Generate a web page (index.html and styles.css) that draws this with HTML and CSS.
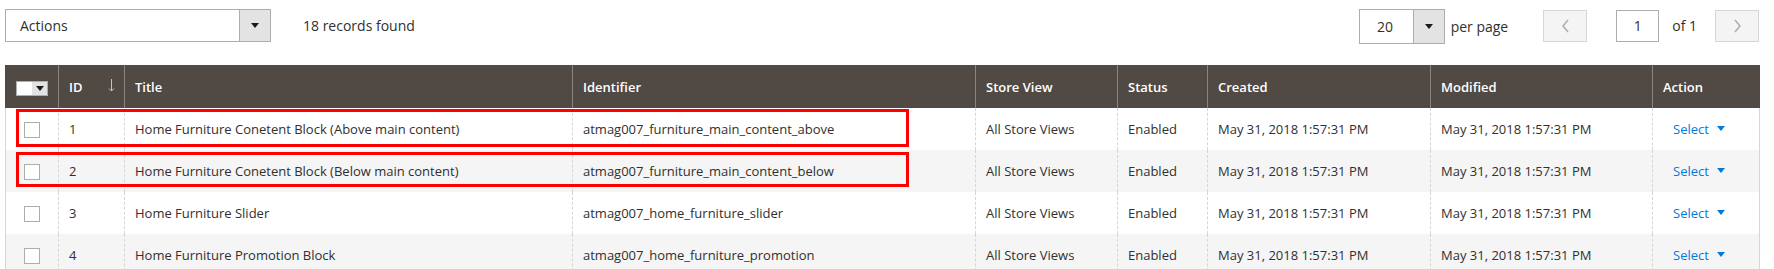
FILE: index.html
```html
<!DOCTYPE html>
<html>
<head>
<meta charset="utf-8">
<link rel="stylesheet" href="styles.css">
</head>
<body>
<div class="page">
  <div class="toolbar">
    <div class="left-tools">
      <div class="actions-select">
        <span class="actions-label">Actions</span>
        <span class="actions-btn"><span class="tri"></span></span>
      </div>
      <span class="records">18 records found</span>
    </div>
    <div class="right-tools">
      <div class="perpage-select">
        <span class="perpage-val">20</span>
        <span class="perpage-btn"><span class="tri"></span></span>
      </div>
      <span class="perpage-label">per page</span>
      <span class="pager-btn prev"><svg width="9" height="14" viewBox="0 0 9 14"><path d="M7 1 L2 7 L7 13" fill="none" stroke="#adadad" stroke-width="1.5"/></svg></span>
      <span class="page-input">1</span>
      <span class="of">of 1</span>
      <span class="pager-btn next"><svg width="9" height="14" viewBox="0 0 9 14"><path d="M2 1 L7 7 L2 13" fill="none" stroke="#adadad" stroke-width="1.5"/></svg></span>
    </div>
  </div>
  <div class="grid-wrap">
    <table class="grid">
      <colgroup>
        <col class="c-check"><col class="c-id"><col class="c-title"><col class="c-ident"><col class="c-store"><col class="c-status"><col class="c-created"><col class="c-mod"><col class="c-action">
      </colgroup>
      <thead>
        <tr>
          <th class="th-check"><span class="mass"><span class="mass-box"></span><span class="mass-btn"><span class="tri"></span></span></span></th>
          <th class="th-id"><span>ID</span><svg class="sort" width="7" height="13" viewBox="0 0 7 13"><path d="M3.5 0 V12 M1 9.5 L3.5 12 L6 9.5" fill="none" stroke="#c9c2bd" stroke-width="1"/></svg></th>
          <th>Title</th>
          <th>Identifier</th>
          <th>Store View</th>
          <th>Status</th>
          <th>Created</th>
          <th>Modified</th>
          <th>Action</th>
        </tr>
      </thead>
      <tbody>
        <tr>
          <td class="td-check"><span class="cb"></span></td>
          <td>1</td>
          <td>Home Furniture Conetent Block (Above main content)</td>
          <td>atmag007_furniture_main_content_above</td>
          <td>All Store Views</td>
          <td>Enabled</td>
          <td>May 31, 2018 1:57:31 PM</td>
          <td>May 31, 2018 1:57:31 PM</td>
          <td class="td-action"><span class="select-link">Select</span><span class="tri blue"></span></td>
        </tr>
        <tr class="alt">
          <td class="td-check"><span class="cb"></span></td>
          <td>2</td>
          <td>Home Furniture Conetent Block (Below main content)</td>
          <td>atmag007_furniture_main_content_below</td>
          <td>All Store Views</td>
          <td>Enabled</td>
          <td>May 31, 2018 1:57:31 PM</td>
          <td>May 31, 2018 1:57:31 PM</td>
          <td class="td-action"><span class="select-link">Select</span><span class="tri blue"></span></td>
        </tr>
        <tr>
          <td class="td-check"><span class="cb"></span></td>
          <td>3</td>
          <td>Home Furniture Slider</td>
          <td>atmag007_home_furniture_slider</td>
          <td>All Store Views</td>
          <td>Enabled</td>
          <td>May 31, 2018 1:57:31 PM</td>
          <td>May 31, 2018 1:57:31 PM</td>
          <td class="td-action"><span class="select-link">Select</span><span class="tri blue"></span></td>
        </tr>
        <tr class="alt">
          <td class="td-check"><span class="cb"></span></td>
          <td>4</td>
          <td>Home Furniture Promotion Block</td>
          <td>atmag007_home_furniture_promotion</td>
          <td>All Store Views</td>
          <td>Enabled</td>
          <td>May 31, 2018 1:57:31 PM</td>
          <td>May 31, 2018 1:57:31 PM</td>
          <td class="td-action"><span class="select-link">Select</span><span class="tri blue"></span></td>
        </tr>
      </tbody>
    </table>
    <div class="highlight hl-1"></div>
    <div class="highlight hl-2"></div>
  </div>
</div>
</body>
</html>
```

FILE: styles.css
```css
html, body {
  margin: 0;
  padding: 0;
  background: #fff;
}
body {
  font-family: "Open Sans", "Liberation Sans", sans-serif;
  font-size: 13px;
  color: #303030;
  width: 1774px;
  height: 269px;
  overflow: hidden;
}
.page {
  padding: 9px 15px 0 5px;
}
.toolbar {
  display: flex;
  justify-content: space-between;
  align-items: flex-start;
  height: 56px;
  font-size: 14px;
}
.left-tools {
  display: flex;
  align-items: center;
  height: 33px;
}
.actions-select {
  display: flex;
  width: 266px;
  height: 33px;
  box-sizing: border-box;
  border: 1px solid #adadad;
  background: #fff;
}
.actions-label {
  flex: 1;
  padding-left: 14px;
  line-height: 31px;
  color: #303030;
}
.actions-btn, .perpage-btn {
  width: 30px;
  background: #e3e3e3;
  border-left: 1px solid #adadad;
  display: flex;
  align-items: center;
  justify-content: center;
}
.tri {
  display: inline-block;
  width: 0;
  height: 0;
  border-left: 4px solid transparent;
  border-right: 4px solid transparent;
  border-top: 5px solid #1a1a1a;
}
.tri.blue {
  border-top-color: #007bdb;
  margin-left: 8px;
  vertical-align: 3px;
}
.records {
  margin-left: 32px;
}
.right-tools {
  display: flex;
  align-items: center;
  height: 35px;
}
.perpage-select {
  display: flex;
  width: 86px;
  height: 35px;
  box-sizing: border-box;
  border: 1px solid #adadad;
}
.perpage-val {
  flex: 1;
  line-height: 33px;
  text-align: center;
  padding-right: 2px;
}
.perpage-label {
  margin-left: 6px;
}
.pager-btn {
  width: 44px;
  height: 32px;
  box-sizing: border-box;
  border: 1px solid #d6d6d6;
  background: #f4f4f4;
  display: flex;
  align-items: center;
  justify-content: center;
  margin-top: -2px;
}
.pager-btn.prev {
  margin-left: 35px;
}
.page-input {
  width: 43px;
  height: 32px;
  box-sizing: border-box;
  border: 1px solid #adadad;
  margin-left: 29px;
  margin-top: -2px;
  text-align: center;
  line-height: 30px;
}
.of {
  margin-left: 13px;
  margin-right: 18px;
  margin-top: -2px;
}
.grid-wrap {
  position: relative;
}
.grid {
  border-collapse: collapse;
  table-layout: fixed;
  width: 1754px;
}
.c-check { width: 53px; }
.c-id { width: 66px; }
.c-title { width: 448px; }
.c-ident { width: 403px; }
.c-store { width: 142px; }
.c-status { width: 90px; }
.c-created { width: 223px; }
.c-mod { width: 222px; }
.c-action { width: 107px; }
.grid th {
  background: #514943;
  color: #fff;
  font-weight: 600;
  font-size: 13px;
  text-align: left;
  height: 43px;
  padding: 0 0 0 10px;
  border-left: 1px solid #8a837f;
  border-right: 1px solid #8a837f;
  box-sizing: border-box;
}
.grid th:first-child { border-left-color: #514943; }
.grid th:last-child { border-right-color: #514943; }
.grid td {
  height: 42px;
  padding: 0 0 0 10px;
  border-left: 1px dashed #d6d6d6;
  border-right: 1px dashed #d6d6d6;
  font-size: 13px;
  color: #303030;
  white-space: nowrap;
  box-sizing: border-box;
}
.grid td:first-child { border-left: 1px solid #d6d6d6; }
.grid td:last-child { border-right: 1px solid #d6d6d6; }
.grid tr.alt td { background: #f5f5f5; }
.th-check, .td-check {
  padding-left: 0 !important;
  text-align: center !important;
}
.mass {
  display: inline-flex;
  vertical-align: middle;
  border: 1px solid #adadad;
  height: 15px;
  box-sizing: border-box;
}
.mass-box {
  width: 15px;
  background: #fff;
}
.mass-btn {
  width: 15px;
  background: #e3e3e3;
  display: flex;
  align-items: center;
  justify-content: center;
}
.th-id {
  position: relative;
}
.sort {
  position: absolute;
  left: 49px;
  top: 14px;
}
.cb {
  display: inline-block;
  width: 16px;
  height: 16px;
  box-sizing: border-box;
  border: 1px solid #adadad;
  background: #fff;
  vertical-align: middle;
}
.td-action {
  padding-left: 20px !important;
}
.select-link {
  color: #007bdb;
}
.highlight {
  position: absolute;
  border: 3px solid #ff0000;
  box-sizing: border-box;
  left: 11px;
  width: 893px;
}
.hl-1 { top: 44px; height: 38px; }
.hl-2 { top: 87px; height: 35px; }
```
